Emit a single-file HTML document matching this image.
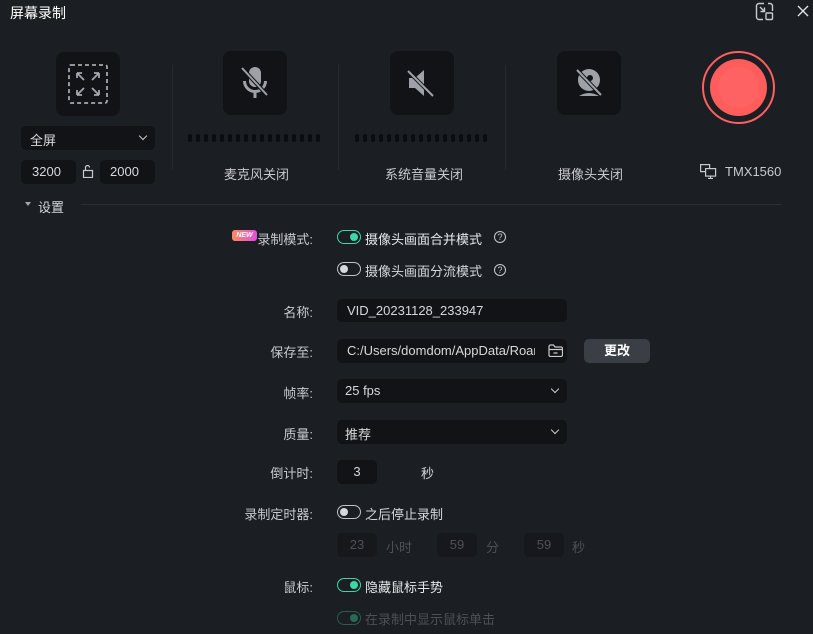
<!DOCTYPE html>
<html><head><meta charset="utf-8"><style>
*{margin:0;padding:0;box-sizing:border-box}
body{width:813px;height:634px;background:#1b1e22;font-family:"Liberation Sans","Noto Sans CJK SC",sans-serif;color:#d6d8db;position:relative;overflow:hidden;font-size:13px}
.a{position:absolute}
.tile{position:absolute;width:64px;height:64px;background:#111316;border-radius:8px}
.inp{position:absolute;background:#111316;border-radius:5px;color:#d6d8db;font-size:13px}
.vs{position:absolute;width:1px;background:#26292e;top:65px;height:105px}
.dots{position:absolute;top:134px;height:8px;display:flex;gap:4px}
.dots i{width:4px;height:8px;border-radius:2px;background:#0b0c0e;display:block}
.lbl{position:absolute;right:500px;text-align:right;font-size:13px;color:#c8cacd;white-space:nowrap}
.tg{position:absolute;width:24px;height:14px;border-radius:7px;border:1.5px solid #bfc2c6}
.tg b{position:absolute;top:2px;left:2px;width:8px;height:8px;border-radius:50%;background:#d6d8db}
.tg.on{border-color:#3fd6a6}
.tg.on b{left:12px;background:#3fd6a6}
.t{position:absolute;font-size:13px;white-space:nowrap}
.chev{position:absolute;right:9px;top:7px;width:6px;height:6px;border-right:1.3px solid #c8cacd;border-bottom:1.3px solid #c8cacd;transform:rotate(45deg)}
.q{position:absolute;width:12px;height:12px;border:1.2px solid #c8cacd;border-radius:50%;font-size:9px;line-height:10px;text-align:center;color:#c8cacd}
</style></head><body>
<div class="a" style="left:10px;top:3px;font-size:14px;color:#fff">屏幕录制</div>
<svg class="a" style="left:755px;top:2px" width="19" height="19" viewBox="0 0 19 19" fill="none" stroke="#c8cacd" stroke-width="1.4"><path d="M9 1.5H4a2.5 2.5 0 0 0-2.5 2.5v11A2.5 2.5 0 0 0 4 17.5h4"/><path d="M17.5 9V4A2.5 2.5 0 0 0 15 1.5h-2"/><rect x="11" y="11" width="6.5" height="6.5" rx="1"/><path d="M5 5l4.5 4.5M9.5 5.5v4h-4"/></svg>
<svg class="a" style="left:797px;top:5px" width="12" height="12" stroke="#e0e2e4" stroke-width="1.4"><path d="M1 1l10 10M11 1L1 11"/></svg>

<div class="tile" style="left:56px;top:52px"></div>
<svg class="a" style="left:68px;top:64px" width="40" height="40" viewBox="0 0 40 40" fill="none" stroke="#a4a8ad" stroke-width="1.8"><rect x="1" y="1" width="38" height="38" rx="2" stroke-dasharray="4 3"/><path d="M9 9l7 7M9 9v5M9 9h5M31 9l-7 7M31 9v5M31 9h-5M9 31l7-7M9 31v-5M9 31h5M31 31l-7-7M31 31v-5M31 31h-5"/></svg>
<div class="inp" style="left:21px;top:126px;width:134px;height:24px;padding:4px 9px">全屏<span class="chev" style="top:7px"></span></div>
<div class="inp" style="left:21px;top:160px;width:55px;height:24px;padding:4px 11px">3200</div>
<svg class="a" style="left:82px;top:165px" width="12" height="13" fill="none" stroke="#c8cacd" stroke-width="1.2"><rect x="1.5" y="5.5" width="9" height="7"/><path d="M3.5 5.5V2.5a2 2 0 0 1 4 0"/></svg>
<div class="inp" style="left:100px;top:160px;width:55px;height:24px;padding:4px 10px">2000</div>

<div class="vs" style="left:172px"></div>
<div class="vs" style="left:338px"></div>
<div class="vs" style="left:505px"></div>

<div class="tile" style="left:223px;top:51px"></div>
<svg class="a" style="left:239px;top:65px" width="32" height="36" viewBox="0 0 32 36" fill="#9ea2a8"><rect x="10" y="2" width="12" height="20" rx="6"/><path d="M4 16a12 12 0 0 0 24 0h-3a9 9 0 0 1-18 0z"/><rect x="14.5" y="26" width="3" height="7"/><path d="M3 3l25 27" stroke="#111316" stroke-width="4"/><path d="M3 3l25 27" stroke="#9ea2a8" stroke-width="2"/></svg>
<div class="dots" style="left:188px"><i></i><i></i><i></i><i></i><i></i><i></i><i></i><i></i><i></i><i></i><i></i><i></i><i></i><i></i><i></i><i></i><i></i></div>
<div class="t" style="left:224px;top:164px;color:#c8cacd">麦克风关闭</div>

<div class="tile" style="left:390px;top:51px"></div>
<svg class="a" style="left:405px;top:67px" width="32" height="32" viewBox="0 0 32 32" fill="#9ea2a8"><path d="M4 11h6l9-8v26l-9-8H4z"/><path d="M3 4l25 25" stroke="#111316" stroke-width="4"/><path d="M3 4l25 25" stroke="#9ea2a8" stroke-width="2"/></svg>
<div class="dots" style="left:355px"><i></i><i></i><i></i><i></i><i></i><i></i><i></i><i></i><i></i><i></i><i></i><i></i><i></i><i></i><i></i><i></i><i></i></div>
<div class="t" style="left:385px;top:164px;color:#c8cacd">系统音量关闭</div>

<div class="tile" style="left:557px;top:51px"></div>
<svg class="a" style="left:572px;top:65px" width="34" height="36" viewBox="0 0 34 36" fill="#9ea2a8"><circle cx="17" cy="15" r="11"/><path d="M7 31q10-6 20 0z"/><circle cx="18" cy="13" r="3" fill="#111316"/><path d="M5 5l24 25" stroke="#111316" stroke-width="4"/><path d="M5 5l24 25" stroke="#9ea2a8" stroke-width="2"/></svg>
<div class="t" style="left:558px;top:164px;color:#c8cacd">摄像头关闭</div>

<div class="a" style="left:702px;top:51px;width:73px;height:73px;border-radius:50%;border:2.5px solid #ff5f5f"></div>
<div class="a" style="left:710px;top:59px;width:57px;height:57px;border-radius:50%;background:#ff5c5c"></div>
<div class="a" style="left:718px;top:67px;width:41px;height:41px;border-radius:50%;background:#fe6262"></div>
<svg class="a" style="left:700px;top:164px" width="17" height="15" fill="none" stroke="#c8cacd" stroke-width="1.2"><rect x="0.6" y="0.6" width="9" height="7"/><rect x="5.6" y="4.6" width="10" height="7.5" fill="#1b1e22"/><path d="M10.5 12v2.5M8 14.5h5"/></svg>
<div class="t" style="left:725px;top:164px;color:#c8cacd">TMX1560</div>

<div class="a" style="left:25px;top:202px;width:0;height:0;border-left:3px solid transparent;border-right:3px solid transparent;border-top:4px solid #a4a8ad"></div>
<div class="t" style="left:38px;top:197px;color:#d6d8db">设置</div>
<div class="a" style="left:81px;top:204px;width:701px;height:1px;background:#2b2e33"></div>

<div class="a" style="left:232px;top:230px;width:25px;height:11px;border-radius:3px;background:linear-gradient(90deg,#ff8a5c,#e24ddf);font-size:7px;font-style:italic;font-weight:bold;color:#fff;text-align:center;line-height:11px">NEW</div>
<div class="lbl" style="top:229px">录制模式:</div>
<div class="tg on" style="left:337px;top:230px"><b></b></div>
<div class="t" style="left:365px;top:229px;color:#e6e8ea">摄像头画面合并模式</div>
<div class="q" style="left:494px;top:231px">?</div>
<div class="tg" style="left:337px;top:262px"><b></b></div>
<div class="t" style="left:365px;top:261px;color:#d6d8db">摄像头画面分流模式</div>
<div class="q" style="left:494px;top:264px">?</div>

<div class="lbl" style="top:302px">名称:</div>
<div class="inp" style="left:337px;top:299px;width:230px;height:23px;padding:4px 10px">VID_20231128_233947</div>
<div class="lbl" style="top:342px">保存至:</div>
<div class="inp" style="left:337px;top:339px;width:230px;height:24px;padding:4px 10px;overflow:hidden;white-space:nowrap"><span style="display:inline-block;width:188px;overflow:hidden">C:/Users/domdom/AppData/Roaming</span></div>
<svg class="a" style="left:548px;top:344px" width="15" height="13" fill="none" stroke="#c8cacd" stroke-width="1.2"><path d="M1 2.5a1.5 1.5 0 0 1 1.5-1.5h3l1.5 2h6a1.5 1.5 0 0 1 1.5 1.5v6.5a1.5 1.5 0 0 1-1.5 1.5h-10.5a1.5 1.5 0 0 1-1.5-1.5z"/><path d="M1 5.5h13M5.5 9h4"/></svg>
<div class="a" style="left:584px;top:339px;width:66px;height:24px;border-radius:5px;background:#3a3f46;color:#fff;font-size:13px;font-weight:bold;text-align:center;line-height:24px">更改</div>
<div class="lbl" style="top:383px">帧率:</div>
<div class="inp" style="left:337px;top:379px;width:230px;height:24px;padding:4px 8px">25 fps<span class="chev"></span></div>
<div class="lbl" style="top:424px">质量:</div>
<div class="inp" style="left:337px;top:420px;width:230px;height:24px;padding:4px 8px">推荐<span class="chev"></span></div>
<div class="lbl" style="top:463px">倒计时:</div>
<div class="inp" style="left:337px;top:460px;width:40px;height:24px;padding:4px 0;text-align:center">3</div>
<div class="t" style="left:421px;top:463px">秒</div>
<div class="lbl" style="top:504px">录制定时器:</div>
<div class="tg" style="left:337px;top:505px"><b></b></div>
<div class="t" style="left:365px;top:504px">之后停止录制</div>
<div class="inp" style="left:337px;top:533px;width:40px;height:24px;padding:4px 0;text-align:center;color:#4d5157;background:#16181b">23</div>
<div class="t" style="left:386px;top:537px;color:#4d5157">小时</div>
<div class="inp" style="left:437px;top:533px;width:40px;height:24px;padding:4px 0;text-align:center;color:#4d5157;background:#16181b">59</div>
<div class="t" style="left:486px;top:537px;color:#4d5157">分</div>
<div class="inp" style="left:524px;top:533px;width:40px;height:24px;padding:4px 0;text-align:center;color:#4d5157;background:#16181b">59</div>
<div class="t" style="left:572px;top:537px;color:#4d5157">秒</div>
<div class="lbl" style="top:577px">鼠标:</div>
<div class="tg on" style="left:337px;top:578px"><b></b></div>
<div class="t" style="left:365px;top:577px;color:#e6e8ea">隐藏鼠标手势</div>
<div class="tg on" style="left:337px;top:611px;border-color:#2a5c4c"><b style="background:#2a6a55"></b></div>
<div class="t" style="left:365px;top:609px;color:#4d5157">在录制中显示鼠标单击</div>
</body></html>
